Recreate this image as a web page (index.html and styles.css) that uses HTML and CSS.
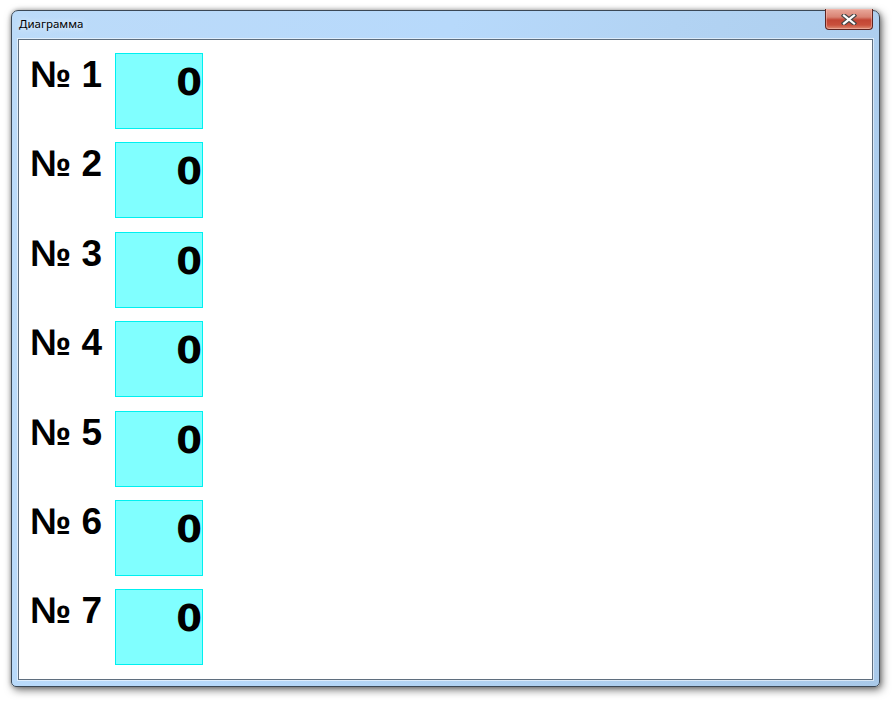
FILE: index.html
```html
<!DOCTYPE html>
<html lang="ru">
<head>
<meta charset="utf-8">
<title>Диаграмма</title>
<link rel="stylesheet" href="styles.css">
</head>
<body>
<div class="window">
  <div class="titlebar">
    <span class="title">Диаграмма</span>
    <div class="close-btn">
      <svg width="16" height="11" viewBox="0 0 16 11">
        <path d="M3 1.5 L13 9.5 M13 1.5 L3 9.5" stroke="#474747" stroke-width="4.5" stroke-linecap="square"/>
        <path d="M3 1.5 L13 9.5 M13 1.5 L3 9.5" stroke="#ffffff" stroke-width="2.2" stroke-linecap="square"/>
      </svg>
    </div>
  </div>
  <div class="client">
    <div class="row"><span class="label">№ 1</span><div class="box">0</div></div>
    <div class="row"><span class="label">№ 2</span><div class="box">0</div></div>
    <div class="row"><span class="label">№ 3</span><div class="box">0</div></div>
    <div class="row"><span class="label">№ 4</span><div class="box">0</div></div>
    <div class="row"><span class="label">№ 5</span><div class="box">0</div></div>
    <div class="row"><span class="label">№ 6</span><div class="box">0</div></div>
    <div class="row"><span class="label">№ 7</span><div class="box">0</div></div>
  </div>
</div>
</body>
</html>
```
FILE: styles.css
```css
html, body {
  margin: 0;
  padding: 0;
  background: #ffffff;
  width: 893px;
  height: 701px;
  overflow: hidden;
}

.window {
  box-sizing: border-box;
  margin: 10px 0 0 11px;
  width: 869px;
  height: 677px;
  border: 1px solid #3b4856;
  border-radius: 7px 7px 5px 5px;
  background: linear-gradient(110deg, #bcdbf9 0%, #b7d9fb 40%, #b2d3f3 60%, #a9c9e9 100%);
  box-shadow: 2px 3px 9px rgba(0, 0, 0, 0.55), 0 0 4px rgba(0, 0, 0, 0.3);
  padding: 0 6px 6px 6px;
  display: flex;
  flex-direction: column;
}

.titlebar {
  height: 28px;
  display: flex;
  align-items: flex-start;
  justify-content: space-between;
  flex: none;
}

.title {
  font-family: "Noto Sans", "Open Sans", sans-serif;
  font-size: 11.5px;
  color: #000;
  padding: 5px 0 0 1px;
  text-shadow: 0 0 6px rgba(255, 255, 255, 0.9);
}

.close-btn {
  box-sizing: border-box;
  width: 48px;
  height: 21px;
  margin-top: -2px;
  border: 1px solid #5e2420;
  border-top: none;
  border-radius: 0 0 4px 4px;
  background: linear-gradient(to bottom, #e9a99c 0%, #d98374 40%, #c24534 55%, #c9503c 80%, #dd8d74 100%);
  box-shadow: inset 0 0 0 1px rgba(255, 200, 190, 0.45);
  display: flex;
  align-items: center;
  justify-content: center;
}

.client {
  flex: 1;
  background: #ffffff;
  border: 1px solid #5f6e7e;
  box-shadow: 0 0 0 1px rgba(255, 255, 255, 0.55);
  padding: 13px 0 0 11px;
  display: flex;
  flex-direction: column;
  gap: 13.4px;
}

.row {
  display: flex;
  align-items: flex-start;
}

.label {
  width: 85px;
  margin-top: 1px;
  font-family: "Liberation Sans", Arial, sans-serif;
  font-weight: bold;
  font-size: 37px;
  line-height: 42px;
  color: #000;
}

.box {
  box-sizing: border-box;
  width: 88px;
  height: 76px;
  background: #80ffff;
  border: 1px solid #00f0f0;
  font-family: "DejaVu Sans", Verdana, sans-serif;
  font-weight: bold;
  font-size: 37px;
  line-height: 42px;
  text-align: right;
  padding: 8px 0 0 0;
  color: #000;
}
```
